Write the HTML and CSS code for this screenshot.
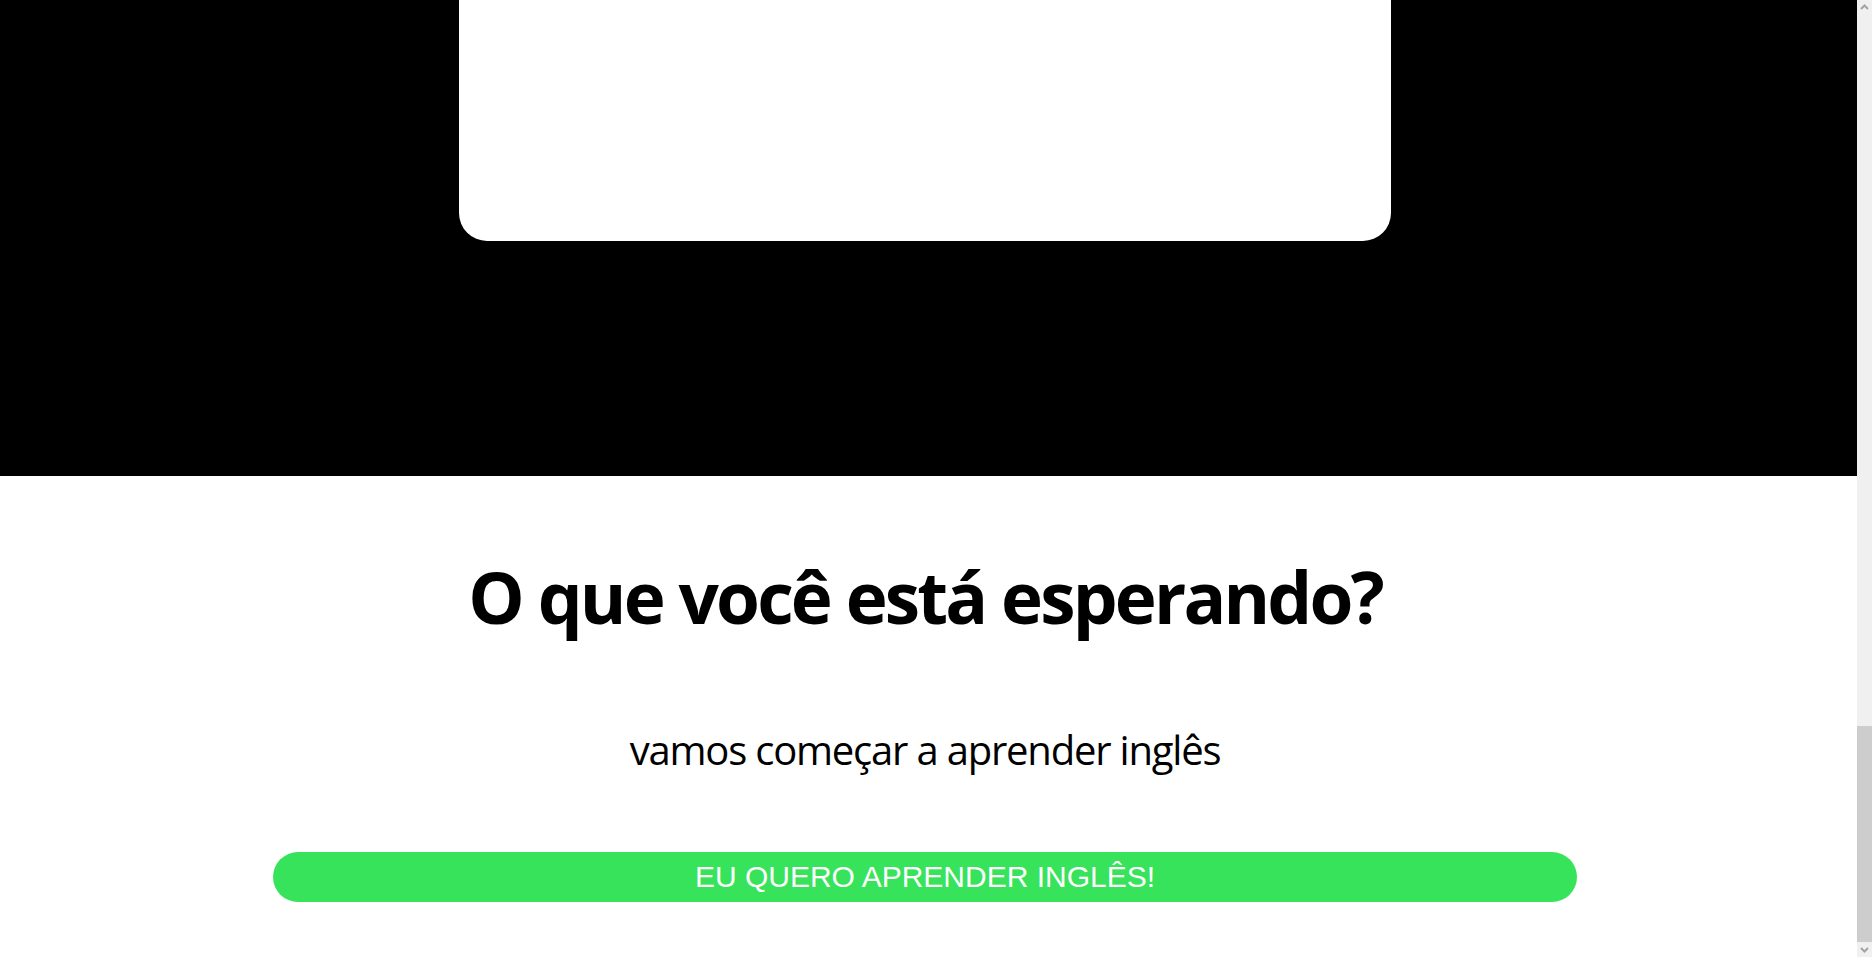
FILE: index.html
```html
<!DOCTYPE html>
<html lang="pt-BR">
<head>
<meta charset="utf-8">
<title>Aprender inglês</title>
<link rel="stylesheet" href="styles.css">
</head>
<body>
<div class="viewport">
  <main class="page">
    <section class="dark">
      <div class="card"></div>
    </section>
    <section class="cta">
      <h2 class="cta-title">O que você está esperando?</h2>
      <p class="cta-sub">vamos começar a aprender inglês</p>
      <a class="cta-btn" href="#">EU QUERO APRENDER INGLÊS!</a>
    </section>
  </main>
  <div class="scrollbar">
    <div class="sb-arrow sb-up"><svg width="15" height="15" viewBox="0 0 15 15"><path d="M4 9 L7.5 5.5 L11 9" fill="none" stroke="#a3a3a3" stroke-width="2"/></svg></div>
    <div class="sb-track"><div class="sb-thumb"></div></div>
    <div class="sb-arrow sb-down"><svg width="15" height="15" viewBox="0 0 15 15"><path d="M4 6 L7.5 9.5 L11 6" fill="none" stroke="#a3a3a3" stroke-width="2"/></svg></div>
  </div>
</div>
</body>
</html>
```
FILE: styles.css
```css
html, body {
  margin: 0;
  padding: 0;
  height: 957px;
  overflow: hidden;
  background: #fff;
}
.viewport {
  display: flex;
  width: 1872px;
  height: 957px;
}
.page {
  width: 1857px;
  display: flex;
  flex-direction: column;
  font-family: "Open Sans", "Noto Sans", sans-serif;
  color: #000;
}
.dark {
  background: #000;
  height: 476px;
  display: flex;
  justify-content: flex-start;
  padding-left: 459px;
  box-sizing: border-box;
}
.card {
  width: 932px;
  height: 241px;
  background: #fff;
  border-radius: 0 0 28px 28px;
}
.cta {
  display: flex;
  flex-direction: column;
  align-items: center;
  padding: 0 280px 0 273px;
}
.cta-title {
  margin: 71px 0 0;
  font-size: 71px;
  font-weight: 700;
  line-height: 100px;
  letter-spacing: -2.8px;
}
.cta-sub {
  margin: 75px 0 0;
  font-size: 40px;
  line-height: 56px;
  letter-spacing: -1.2px;
}
.cta-btn {
  margin-top: 74px;
  width: 100%;
  height: 50px;
  border-radius: 25px;
  background: #36e35a;
  color: #fff;
  font-family: "Liberation Sans", Arial, sans-serif;
  font-size: 30px;
  line-height: 50px;
  text-align: center;
  text-decoration: none;
  box-sizing: border-box;
}
.scrollbar {
  width: 15px;
  height: 957px;
  background: #f0f0f0;
  display: flex;
  flex-direction: column;
}
.sb-arrow {
  height: 15px;
  flex: none;
}
.sb-track {
  flex: 1;
  display: flex;
  flex-direction: column;
  justify-content: flex-end;
}
.sb-thumb {
  height: 216px;
  background: #cdcdcd;
}
```
